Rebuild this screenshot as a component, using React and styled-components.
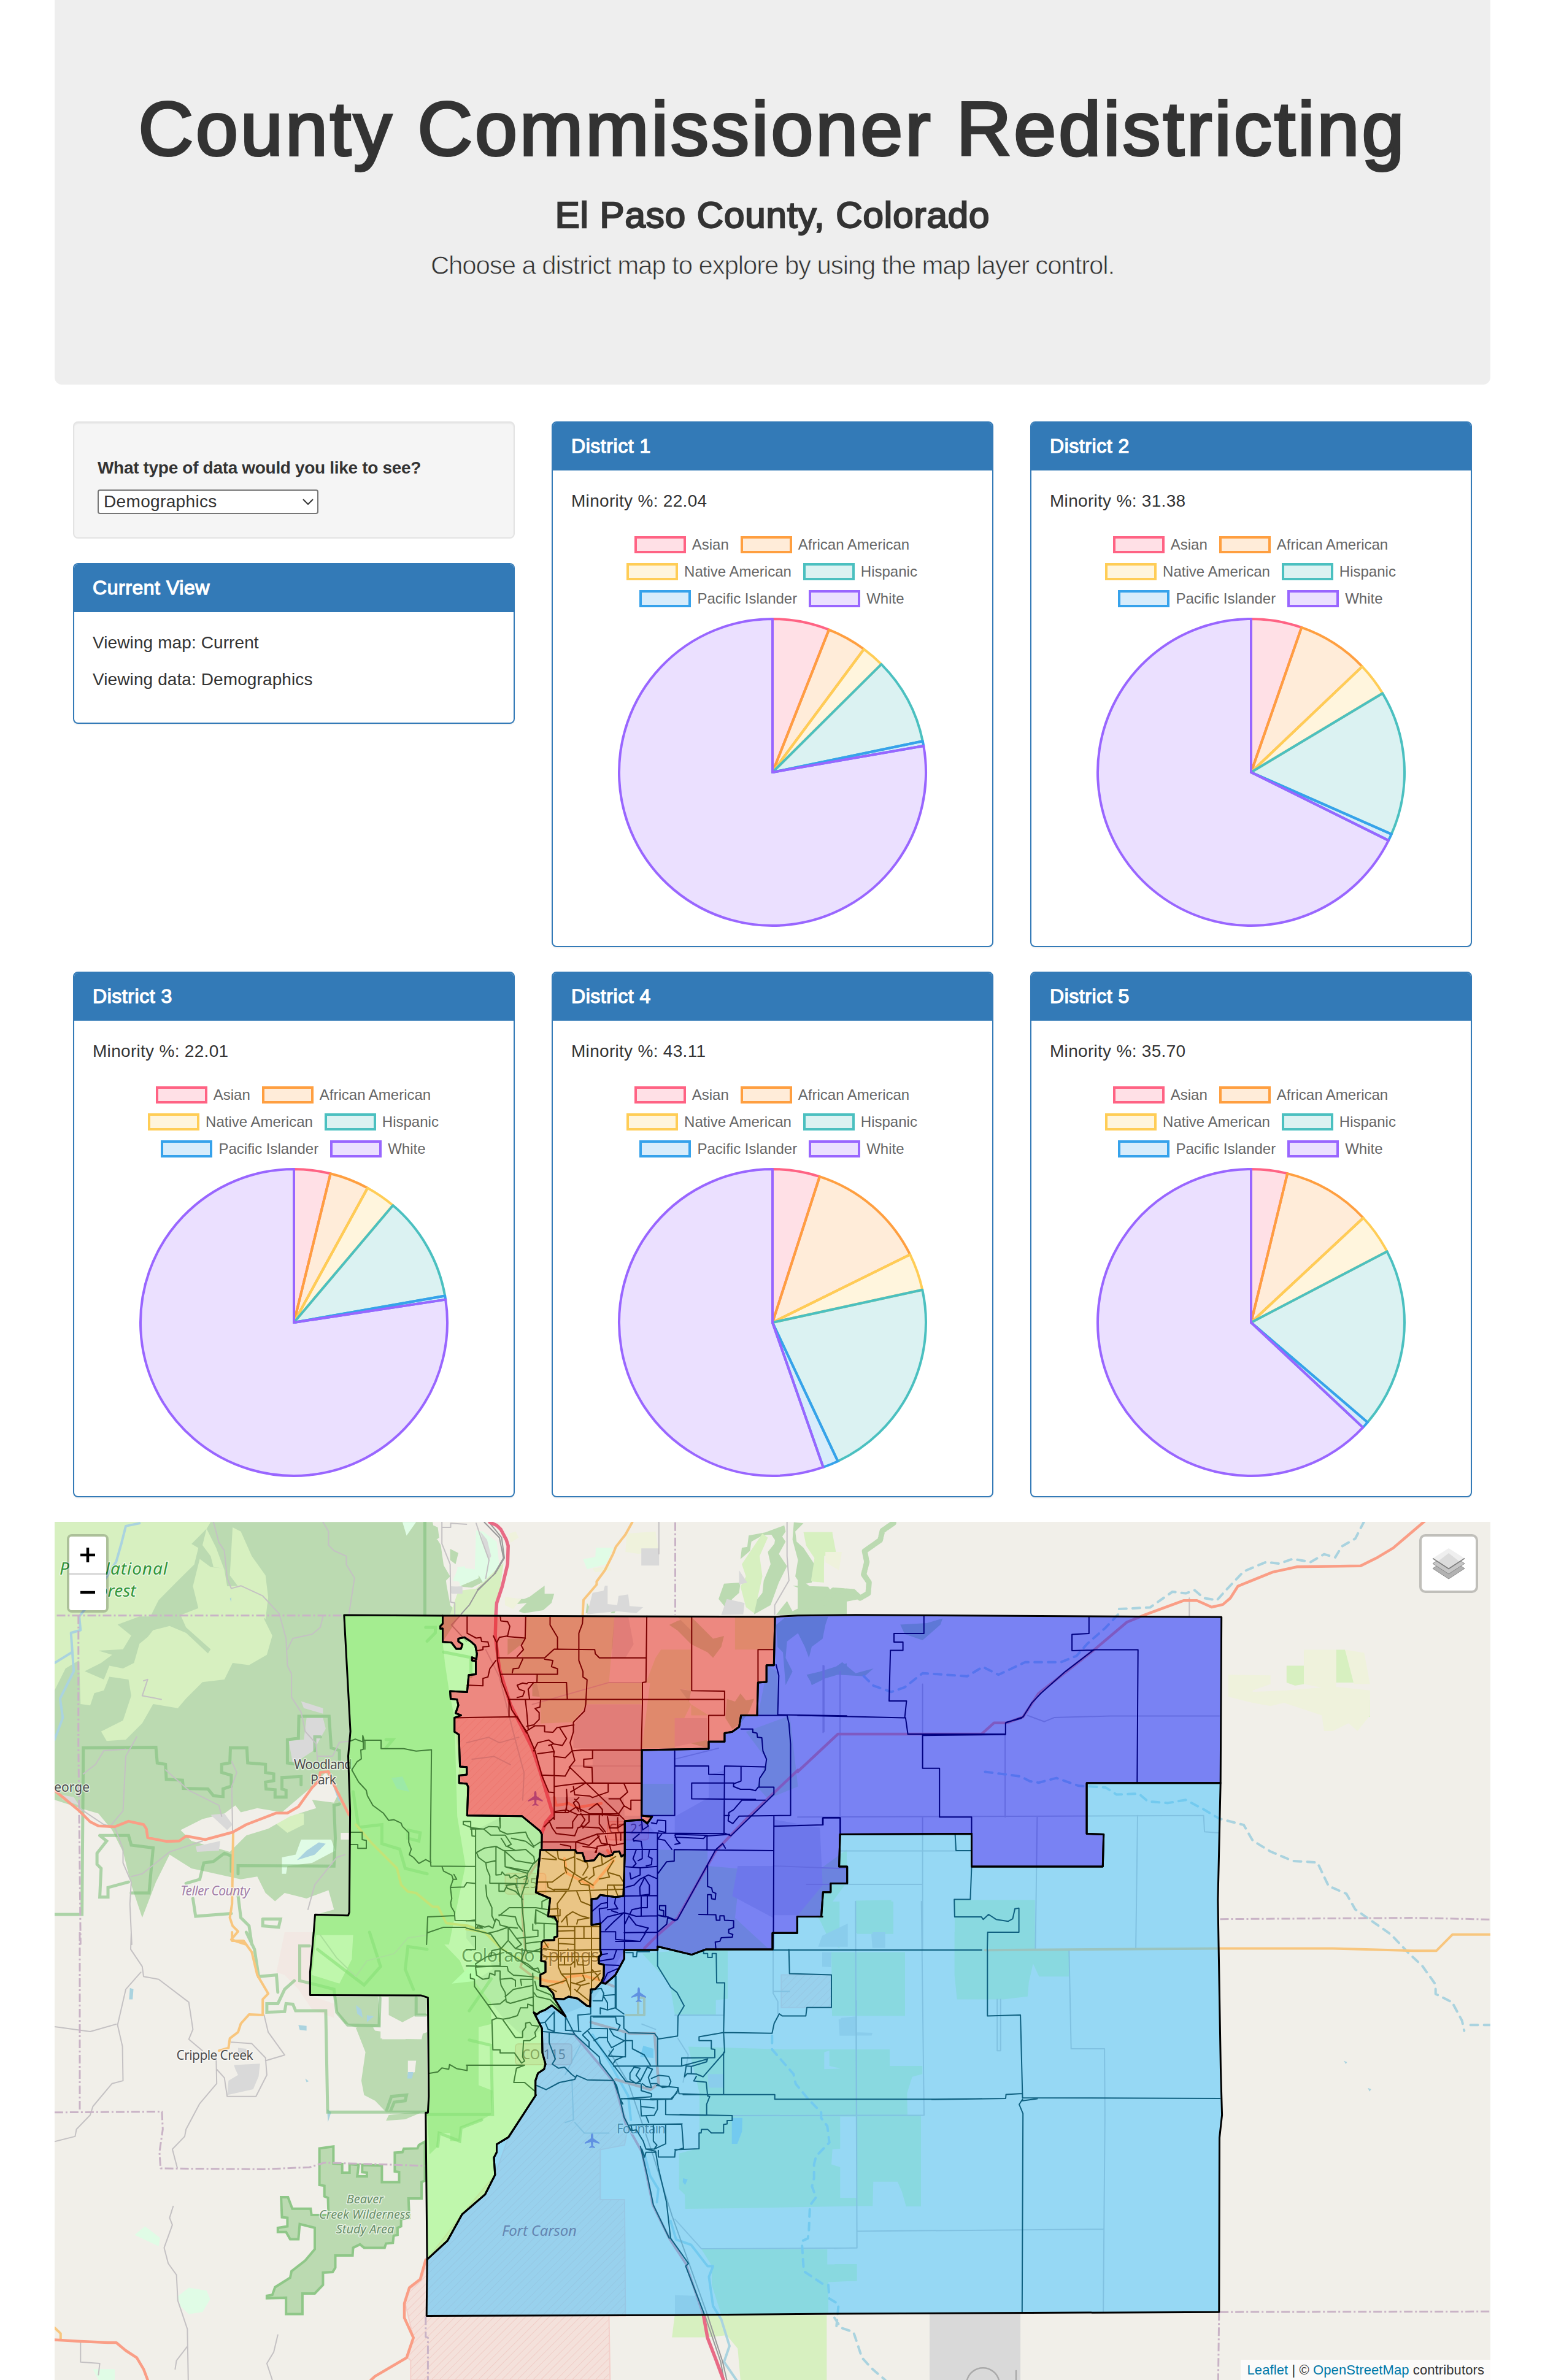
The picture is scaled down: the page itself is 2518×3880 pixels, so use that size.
import React from "react";
import styled, { createGlobalStyle } from "styled-components";

const GlobalStyle = createGlobalStyle`
  *, *::before, *::after { box-sizing: border-box; }
  html, body { margin: 0; background: #fff; }
  body {
    font-family: "Liberation Sans", Arial, sans-serif;
    font-size: 28px;
    line-height: 40px;
    color: #333;
  }
`;

/* ---------- page frame ---------- */

const Container = styled.main`
  width: 2340px;
  margin: 0 auto;
`;

const Jumbotron = styled.header`
  height: 627px;
  padding-top: 141px;
  background: #eee;
  border-radius: 0 0 12px 12px;
  text-align: center;
`;

const Title = styled.h1`
  margin: 0;
  font-size: 124px;
  font-weight: 400;
  line-height: 139px;
  letter-spacing: 3.95px;
  -webkit-text-stroke: 4px #333;
`;

const Subtitle = styled.h2`
  margin: 38px 0 0;
  font-size: 60px;
  font-weight: 400;
  line-height: 66px;
  letter-spacing: 0.95px;
  -webkit-text-stroke: 2.4px #333;
`;

const Lead = styled.p`
  margin: 20px 0 0;
  font-size: 42px;
  line-height: 58px;
  letter-spacing: -1.12px;
  -webkit-text-stroke: 0.8px #eee;
`;

const Grid = styled.section`
  display: grid;
  grid-template-columns: repeat(3, 720px);
  grid-auto-rows: 857px;
  column-gap: 60px;
  row-gap: 40px;
  padding: 60px 30px 40px;
`;

const Stack = styled.div`
  display: flex;
  flex-direction: column;
  gap: 40px;
`;

/* ---------- controls and panels ---------- */

const Well = styled.div`
  display: flex;
  flex-direction: column;
  align-items: flex-start;
  height: 191px;
  padding: 54px 38px 0;
  background: #f5f5f5;
  border: 2px solid #e3e3e3;
  border-radius: 8px;
  box-shadow: inset 0 2px 2px rgba(0, 0, 0, 0.05);
`;

const Label = styled.label`
  font-weight: 700;
  letter-spacing: -0.32px;
  line-height: 40px;
  margin-bottom: 15px;
`;

const Select = styled.button`
  display: flex;
  align-items: center;
  justify-content: space-between;
  width: 360px;
  height: 40px;
  padding: 0 6px 0 8px;
  border: 2px solid #767676;
  border-radius: 4px;
  background: #fff;
  color: #333;
  font: inherit;
  letter-spacing: 0.35px;
`;

const Panel = styled.article`
  height: ${(p) => p.$height}px;
  border: 2px solid #337ab7;
  border-radius: 8px;
  background: #fff;
  box-shadow: 0 2px 2px rgba(0, 0, 0, 0.05);
  overflow: hidden;
`;

const PanelHeading = styled.h3`
  height: 78px;
  margin: 0;
  padding: 20px 30px;
  background: #337ab7;
  color: #fff;
  font-size: 32px;
  font-weight: 400;
  line-height: 36px;
  letter-spacing: 0.55px;
  -webkit-text-stroke: 1.3px #fff;
`;

const PanelBody = styled.div`
  padding: 30px 30px 0;
`;

const Line = styled.p`
  margin: 0 0 20px;
  letter-spacing: ${(p) => p.$tracking ?? 0.1}px;
`;

/* ---------- chart ---------- */

const Legend = styled.div`
  display: flex;
  flex-direction: column;
  gap: 16px;
  margin: 37px 0 16px -2px;
`;

const LegendRow = styled.div`
  display: flex;
  justify-content: center;
  gap: 19px;
  height: 28px;
`;

const LegendItem = styled.span`
  display: flex;
  align-items: center;
  gap: 10px;
  font-size: 24px;
  line-height: 28px;
  color: #666;
`;

const Swatch = styled.i`
  width: 84px;
  height: 28px;
  border: 4px solid rgb(${(p) => p.$rgb});
  background: rgba(${(p) => p.$rgb}, 0.2);
`;

const Pie = styled.svg`
  display: block;
  width: 506px;
  height: 506px;
  margin: 0 auto;
`;

const GROUPS = {
  Asian: "255,99,132",
  "African American": "255,159,64",
  "Native American": "255,205,86",
  Hispanic: "75,192,192",
  "Pacific Islander": "54,162,235",
  White: "153,102,255",
};

const LEGEND_ROWS = [
  ["Asian", "African American"],
  ["Native American", "Hispanic"],
  ["Pacific Islander", "White"],
];

/* End angle of every slice but the last, in degrees clockwise from noon. */
const DISTRICTS = [
  { id: 1, minority: "22.04", ends: [21.6, 36.6, 45.2, 78.3, 80.1] },
  { id: 2, minority: "31.38", ends: [19.2, 46.4, 59, 113.8, 116.4] },
  { id: 3, minority: "22.01", ends: [13.8, 28.7, 40.2, 80, 81.4] },
  { id: 4, minority: "43.11", ends: [17.9, 63.7, 77.7, 154.8, 160.7] },
  { id: 5, minority: "35.70", ends: [13.7, 47, 62.4, 130.6, 133.2] },
];

const slicePath = (from, to) => {
  const pt = (deg) => {
    const a = (deg * Math.PI) / 180;
    return `${(253 + 250 * Math.sin(a)).toFixed(2)},${(253 - 250 * Math.cos(a)).toFixed(2)}`;
  };
  return `M253,253 L${pt(from)} A250,250 0 ${to - from > 180 ? 1 : 0} 1 ${pt(to)} Z`;
};

function DistrictPanel({ district }) {
  const stops = [0, ...district.ends, 360];
  return (
    <Panel $height={857}>
      <PanelHeading>District {district.id}</PanelHeading>
      <PanelBody>
        <Line $tracking={0.3}>Minority %: {district.minority}</Line>
        <Legend>
          {LEGEND_ROWS.map((row) => (
            <LegendRow key={row[0]}>
              {row.map((name) => (
                <LegendItem key={name}>
                  <Swatch $rgb={GROUPS[name]} />
                  {name}
                </LegendItem>
              ))}
            </LegendRow>
          ))}
        </Legend>
        <Pie viewBox="0 0 506 506">
          {Object.values(GROUPS).map((rgb, i) => (
            <path
              key={rgb}
              d={slicePath(stops[i], stops[i + 1])}
              fill={`rgba(${rgb},0.2)`}
              stroke={`rgb(${rgb})`}
              strokeWidth="4"
              strokeLinejoin="round"
            />
          ))}
        </Pie>
      </PanelBody>
    </Panel>
  );
}

/* ---------- map geometry ---------- */

/* Each survey sheet has its own origin and scale: [x, y, scaleX, scaleY]. */
const SHEETS = {
  nw: [80, 2470, 0.44643, 0.44643],
  n: [680, 2600, 0.44643, 0.44643],
  ne: [1300, 2470, 0.72704, 0.5102],
  sw: [80, 3150, 0.44643, 0.46556],
  s: [680, 3200, 0.44643, 0.43367],
  se: [1360, 3150, 0.68878, 0.46556],
  top: [680, 2470, 0.44643, 0.33333],
  city: [760, 2930, 0.33333, 0.33333],
  plain: [1100, 3100, 0.33333, 0.44643],
};

const at = (sheet, text) => {
  const [ox, oy, sx, sy] = SHEETS[sheet];
  return text
    .trim()
    .split(/\s+/)
    .map((p) => {
      const [x, y] = p.split(",").map(Number);
      return [+(ox + x * sx).toFixed(1), +(oy + y * sy).toFixed(1)];
    });
};

const back = (pts) => [...pts].reverse();
const ring = (...parts) => "M" + parts.flat().map((p) => p.join(",")).join("L") + "Z";

/* Several polylines or polygons, separated by ";". */
const lines = (sheet, text, close) =>
  text
    .split(";")
    .filter((s) => s.trim())
    .map((s) => "M" + at(sheet, s).map((p) => p.join(",")).join("L") + (close ? "Z" : ""))
    .join("");
const areas = (sheet, text) => lines(sheet, text, true);

const redWest = at("n", "93,76 93,105 84,115 84,123 93,123 93,172 125,174 142,197 160,197 165,180 150,170 150,160 172,155 195,170 212,185 218,215 216,235 200,228 200,240 214,242 214,290 188,293 182,355 120,352 122,380 145,382 150,403 140,432 160,440 136,449 136,500 152,510 156,627 181,629 181,656 153,660 153,687 181,690 186,702 182,806 382,808 448,862 455,875 454,930");
const redSouth = at("city", "362,258 532,258 540,272 568,272 580,312 625,308 650,275 680,290 712,283 722,268 748,265 758,290 775,278");
const redEast = [
  ...at("city", "775,278 775,116 862,110 885,128 908,95 857,90"),
  ...at("n", "820,567 1064,562 1064,536 1122,536 1122,505 1150,500 1175,482 1182,440 1241,440 1244,320 1275,318 1275,257 1302,257 1306,80"),
];
const orangeWest = at("city", "362,258 340,465 410,495 400,582 432,585 445,612 445,680 430,685 430,698 378,700 368,710 366,800 387,805 387,855 362,868 362,922 395,927 425,960 430,985");
const orangeEast = at("city", "775,278 768,483 730,488 655,478 640,495 612,498 612,625 655,618 655,745 660,770 648,780 648,812 673,820 672,875 660,905");
const orangeSouth = at("city", "660,905 630,938 608,940 605,1023 590,1020 545,985 500,975 475,988 430,985");
const greenEast = [
  ...at("city", "430,985 485,1072 418,1018 385,1040 360,1050 345,1062 330,1052 370,1130 372,1250 387,1305 380,1330 350,1350 338,1385 338,1460"),
  ...at("s", "433,497 333,655 290,682 290,712 280,732 284,797 248,870 164,945 110,1045 36,1115"),
];
const greenWest = [
  ...at("sw", "1380,1147 1375,632 1383,632 1386,575 1383,229 1357,221 953,220 953,140 966,0"),
  ...at("nw", "971,1459 1092,1462 1096,1450 1099,1080 1092,880 1100,790 1077,365"),
];
const blueSouth = [
  ...at("ne", "948,856 648,856 648,1018 686,1020 684,1123 390,1123 390,1018 95,1020 93,1123 111,1123 111,1177 74,1177 74,1205 57,1205 53,1283"),
  ...at("plain", "720,55 598,55 598,115 477,115 477,175 150,175 82,194"),
  ...at("city", "935,730 935,747 772,747 772,790 728,870 680,912 660,905"),
];
const blueNorth = at("ne", "0,321 130,319 950,326");
const cyanEast = [...at("ne", "948,856 942,1230"), ...at("se", "909,50 914,480 917,640 911,720 910,1330")];
const cyanSouth = [...at("se", "0,1336"), ...at("s", "930,1324 34,1327")];

const OVERLAY = [
  { fill: "rgb(142,255,111)", d: ring(redWest, orangeWest, greenEast, greenWest) },
  { fill: "rgb(234,33,23)", d: ring(redWest, redSouth, redEast) },
  { fill: "rgb(252,177,49)", d: ring(redSouth, orangeEast, orangeSouth, back(orangeWest)) },
  { fill: "rgb(2,21,253)", d: ring(back(redEast).slice(0, 1), blueNorth, blueSouth, back(orangeEast), redEast) },
  { fill: "rgb(60,193,255)", d: ring(cyanEast, cyanSouth, back(greenEast), back(orangeSouth), back(blueSouth)) },
];

const FOREST =
  areas("nw", "20,25 1400,25 1412,80 1430,110 1440,180 1450,250 1465,330 1500,365 1437,463 1445,540 1460,640 1480,740 1490,1100 1520,1280 1460,1568 960,1568 971,1460 1040,1440 1020,1370 940,1400 900,1390 860,1380 825,1410 790,1380 760,1320 700,1330 520,1290 440,1240 390,1340 340,1470 300,1350 275,1250 270,1230 230,1150 180,1090 130,1075 20,1040") +
  areas("sw", "960,0 1400,0 1500,100 1568,260 1568,640 1375,632 1386,575 1383,229 953,220;1040,225 1200,225 1210,330 1140,340 1080,320 1050,280;1240,228 1380,228 1378,290 1340,290 1290,315 1240,290;1120,335 1180,330 1190,345 1230,350 1215,375 1300,375 1380,350 1380,630 1230,630 1190,590 1150,570 1140,520 1155,420;1230,660 1240,640 1375,625 1300,655") +
  areas("s", "40,60 200,40 270,130 270,230 190,250 200,450 275,480 270,570 235,590 160,620 155,670 120,670 120,640 80,640 75,690 45,720 36,570") +
  areas("top", "0,35 40,38 75,60 80,110 70,120 90,230 120,300 105,320 120,485 0,485;120,165 150,185 140,240 120,220;160,310 245,275 250,320 200,355 160,350;410,400 440,370 465,345 465,385 500,385 490,430 460,465 390,480 370,470 400,430 330,440 320,410 390,410;1210,100 1270,85 1340,50 1345,80 1300,170 1310,90 1260,100 1220,130 1215,175 1180,215 1185,160 1205,155;1375,35 1410,40 1380,80 1385,130 1410,160 1450,240 1440,330 1400,340 1380,300 1390,220 1370,120;1290,90 1320,80 1345,130 1320,190 1350,250 1320,330 1290,440 1230,485 1230,430 1260,380 1265,320 1290,240 1280,180 1310,130;1120,335 1180,330 1175,380 1150,410 1130,460 1100,410;1310,488 1350,420 1370,470 1400,450 1440,380 1370,345 1500,350 1520,390 1568,365 1568,490;620,430 640,480 615,480;735,440 720,480 705,480") +
  areas("n", "650,90 720,90 730,150 710,200 690,240 660,180;920,110 950,95 1000,80 1030,110 1080,160 1120,150 1110,190 1080,230 1060,210 1000,180 950,130;1130,380 1160,390 1180,360 1200,385 1230,380 1210,430 1180,470 1150,490 1125,450;380,240 460,240 500,285 370,285;330,160 390,160 380,180 330,220;420,320 545,325 545,380 420,370;600,480 650,500 620,540 570,550;930,340 1000,350 990,400 930,380;1000,490 1060,500 1060,560 990,540;1310,110 1340,85 1380,80 1500,80 1490,110 1480,160 1440,190 1430,230 1415,190 1390,140 1350,170 1345,230 1370,280 1345,330 1335,210 1315,190;1430,300 1470,280 1568,250 1568,280 1500,300 1440,330") +
  areas("ne", "0,200 40,240 100,235 150,265 60,290 40,310 0,300;230,350 290,345 325,330 320,350 280,400 240,380;20,510 80,490 100,470 130,505 170,490 150,515 90,510 30,535");

const GRASS =
  areas("nw", "20,25 590,25 575,50 610,120 640,200 650,260 700,258 790,310 785,380 815,440 795,510 730,548 670,540 640,600 560,610 500,670 470,705 380,690 340,760 280,820 210,825 190,790 270,750 300,660 290,600 220,590 200,640 165,650 150,695 115,690 110,530 60,560 20,640;670,45 700,60 740,150 790,220 800,300 790,380 720,300 660,220;830,1110 870,1088 930,1090 930,1130 870,1160 820,1120") +
  areas("top", "120,485 150,370 215,360 260,300 315,235 290,490;1410,83 1515,83 1530,190 1485,200 1485,330 1440,325 1450,210 1420,150;1260,90 1280,110 1250,200 1260,300 1230,480 1200,450 1180,350 1200,300 1185,240 1220,170") +
  areas("n", "400,78 720,78 700,320 822,320 822,400 620,400 570,465 450,470 450,385 430,290 300,290 295,230 380,230;890,200 1000,200 1000,350 835,320 870,230;1160,80 1300,80 1300,200 1244,200 1160,200;950,80 1000,80 1000,130;850,320 940,320 1000,400 960,480 940,560 820,560;1000,400 1064,440 1000,440;877,930 1060,935 1060,990 1180,1000 1160,1180 1280,1290 1000,1312 877,1290;1360,440 1390,700 1280,745 1240,700 1275,600 1200,500 1350,445;820,690 935,690 935,806 820,806;1280,260 1316,280 1316,438 1244,438;1390,1060 1568,930 1568,1050 1480,1170 1390,1170") +
  areas("ne", "1096,481 1135,481 1135,540 1115,545 1096,535;1135,435 1172,480 1135,480;1207,430 1227,430 1247,505 1247,535 1207,535;1247,590 1283,590 1283,645 1245,643;130,1232 210,1230 214,1335 130,1335;352,1230 532,1230 532,1385 352,1385;15,55 78,55 78,110 60,115 58,215 30,210 40,120") +
  areas("plain", "0,180 258,180 258,355 200,360 200,415 0,415 -25,300 -160,190;765,185 1125,185 1125,418 768,418;885,0 1068,0 1068,118 890,118;645,0 805,0 805,170 760,150 710,70;65,530 540,540 1050,540 1050,600 1210,600 1210,630 1160,640 1135,700 1137,780 1203,783 1203,1113 1130,1113 1110,1060 1088,1023 970,1023 967,1112 890,1112 890,785 808,785 808,903 770,905 765,960 808,970 808,1082 890,1082 890,1112 300,1120 50,1122 48,1070 20,1050 20,920 120,900 120,700;130,1270 745,1270 745,1325 890,1325 890,1385 750,1390 750,1505 225,1505 180,1400 180,1330") +
  areas("se", "284,0 475,0 475,60 555,62 555,155 484,155 470,110 460,175 457,225 400,235 290,235 284,150;0,1162 53,1162 53,1222 0,1222") +
  areas("s", "940,1324 1495,1324 1495,1568 1180,1568 1170,1450 1130,1400 1060,1408 930,1408");

const OPEN_LAND =
  areas("nw", "480,1150 560,1110 640,1090 680,1060 700,1085 760,1070 850,1085 950,1000 1010,940 1060,1010 1040,1050 960,1040 975,1070 880,1100 800,1145 720,1170 660,1230 520,1190;1065,1160 1095,1160 1095,1185 1065,1185") +
  areas("sw", "975,10 1110,10 1105,95 1060,180 960,150;1210,305 1370,330 1360,375 1210,372;1310,450 1340,450 1335,490 1310,500") +
  areas("plain", "730,550 755,545 755,600 810,610 730,612");

const WOODS =
  areas("nw", "370,370 400,310 470,240 530,180 545,120 520,105 575,50 560,110 590,150 600,190 640,195 590,190 550,160 525,260 545,340 480,365 500,410 590,490 580,505 500,430 440,405 380,420 360,445 330,470 310,540 270,560 220,550 200,600 130,570 190,540 230,510 180,495 270,490 300,440 250,400 330,370;400,320 440,275 470,275 460,330 430,340");

const TOWN =
  areas("nw", "875,825 930,820 940,740 1000,740 1010,780 965,860 890,910;590,1095 640,1090 670,1130 650,1150;535,1210 625,1190 620,1225 540,1230;920,680 1000,705 1000,725 930,705;1465,260 1510,262 1500,285 1465,285;40,1020 90,1030 110,1060 50,1040") +
  areas("top", "640,380 680,370 685,345 695,345 695,435 730,440 735,395 770,388 775,445 825,450 800,480 730,470 620,485;230,80 255,120 270,200 262,220 250,180;125,350 165,348 165,385 125,385;818,163 883,163 883,247 818,247;1175,270 1205,330 1175,340;1130,410 1195,430 1190,485 1110,488") +
  areas("city", "45,160 165,100 270,100 362,170 360,260 775,260 775,90 850,90 930,180 935,740 775,745 680,905 605,1010 480,1060 330,1050 375,1130 300,1190 180,1080 40,900 130,840 45,600;370,60 400,0 770,0 775,110 535,258 372,250;0,620 130,650 170,740 90,800 0,690") +
  areas("n", "1064,660 1120,640 1120,870 940,870 940,810 1064,740;1300,820 1470,850 1480,1060 1390,1170 1300,1170;720,78 770,78 790,180 760,230 710,230;1170,990 1300,990 1300,1180 1150,1100;640,570 815,570 815,688 640,687;570,480 620,400 820,400 818,565 570,560;940,450 1060,450 1060,530 940,555") +
  areas("sw", "675,465 770,460 765,505 745,550 650,570 655,520 690,500 680,480;690,405 720,408 730,440 690,420") +
  areas("se", "225,1335 440,1335 440,1568 225,1568;15,300 50,295 50,350 90,352 88,362 15,362;90,0 120,0 120,55 90,55") +
  areas("plain", "800,430 885,425 885,490 805,490;960,118 1028,118 1028,168 965,168;160,630 238,630 238,680 165,680;0,1437 115,1440 140,1505 0,1505;720,185 765,185 762,240 720,238;720,125 845,80 845,165 700,165");

const MINT =
  areas("nw", "850,1250 900,1240 920,1185 1030,1185 1045,1225 960,1270 870,1282 865,1310 850,1310;1290,25 1340,25 1305,75;1490,190 1568,200 1568,230 1500,260") +
  areas("top", "215,75 240,80 290,130 300,250 240,330 210,260;652,160 715,160 690,240 620,265 605,215 650,205;130,320 150,255 175,250 170,330") +
  areas("sw", "470,1275 510,1245 575,1255 588,1285 560,1330 510,1337 480,1310;312,1060 350,1030 405,1070 400,1100;160,1530 240,1530 240,1568 180,1568;1470,180 1568,90 1568,170");

const PALE =
  areas("ne", "965,510 1060,512 1060,540 1020,560 1020,600 965,580;1020,565 1095,560 1200,548 1283,560 1283,640 1255,690 1235,665 1200,690 1180,690 1175,640 1090,600 1060,610 1020,600;1135,430 1207,430 1207,560 1135,540;1227,430 1270,440 1283,540 1247,540") +
  areas("top", "765,90 870,80 880,163 810,190 760,180;335,90 360,80 370,110 340,135;320,400 380,410 350,460 320,440;640,260 700,250 710,270 650,280;1490,180 1550,180 1540,270 1490,230");

const PINK = areas("sw", "860,0 960,0 950,220 1040,250 1040,300 960,270 910,200 860,150 830,140");

const MILITARY =
  ring(at("sw", "1380,1147 1360,1220 1315,1250 1300,1300 1330,1420 1310,1490 1320,1500 1320,1568"), at("s", "704,1568 700,1327 760,1327 757,890 668,890 668,702 757,685 770,610 720,445 570,265 460,260 467,380 433,430 433,497 333,655 284,797 164,945 36,1115")) +
  areas("n", "136,449 365,445 480,720 495,800 450,860 382,808 182,806 181,690 153,660 156,627") +
  areas("plain", "520,268 765,268 765,387 520,387");

const WATER =
  areas("nw", "905,1260 940,1225 985,1195 1010,1200 970,1240;1250,960 1290,955 1315,1010 1270,1000;660,305 665,300 665,318") +
  areas("sw", "295,195 308,200 305,235 292,235;910,325 940,328 940,345 915,342;1120,255 1140,270 1145,300 1125,285;1160,290 1185,295 1160,315;1310,490 1330,490 1325,512 1308,512;1015,620 1030,630 1018,665;935,512 948,522 940,525") +
  areas("plain", "278,790 330,790 328,840 305,885 278,885;40,1010 62,1015 50,1035 38,1025") +
  areas("se", "1205,450 1213,455 1210,462;1262,545 1270,550 1266,558") +
  areas("city", "865,1215 915,1230 915,1275 850,1270");

const FOREST_EDGE =
  lines("nw", "20,1458 120,1458 125,850 390,848 395,905 425,910 428,965 487,968 490,998 580,1000 600,1025 635,1028 635,1000 665,990 665,950 630,940 630,910 660,905 662,850 722,850 725,905 790,910 790,940 820,945 820,970 790,975 792,1000 825,1003 825,1030 865,1030 865,1005 850,1000 850,958 920,955 920,985;905,910 870,905 870,820 910,815 912,735 1022,735 1030,850 1060,860 1060,900;970,860 970,810 990,810;1372,25 1372,365;690,1310 690,1280 1040,1282 1045,1180 1040,1060 1060,1055;560,1290 565,1270 600,1265 640,1235 665,1245 665,1300;690,1390 700,1470 730,1500 740,1568;560,1290 550,1330 500,1345;525,1400 535,1465 665,1455;185,1170 290,1170 300,1205 380,1215 365,1380 300,1380;185,1170 210,1190 175,1235 175,1275 190,1290 185,1395 215,1395 215,1360 290,1340;780,1475 845,1475 838,1505 780,1500 780,1475;1375,410 1410,410 1410,430 1380,460;1440,500 1540,520 1540,590;1230,820 1255,820 1230,850;1110,1010 1130,1140 1215,1130 1215,1200 1280,1220 1300,1290 1380,1310;1310,1150 1355,1160 1350,1190 1310,1180 1310,1150") +
  lines("sw", "720,0 750,60 765,155 830,150 835,210;895,170 860,200 835,250 795,250 795,280 860,278 865,250 890,252 900,275 1010,275 1017,630 1375,630;950,48 915,48 915,170 980,185 1040,200 1050,280 1090,325 1205,328 1208,230;1230,630 1250,575 1305,570 1300,590 1260,595 1245,630;1340,230 1340,290 1375,290;980,60 1150,185 1210,120 1170,0;1330,200 1300,130 1310,50 1380,60") +
  lines("s", "36,570 275,570 270,310 190,290;270,60 190,180;75,690 80,640 155,670 160,620 235,590");

const BEAVER_CREEK = areas("sw", "987,757 1038,750 1038,810 1070,812 1070,842 1097,842 1097,812 1130,815 1125,855 1160,855 1160,842 1143,840 1143,815 1215,817 1215,875 1278,875 1278,840 1262,838 1262,772 1290,770 1295,758 1345,757 1350,745 1372,733 1372,870 1360,875 1360,932 1312,932 1315,1000 1285,1005 1285,1030 1272,1035 1272,1060 1258,1063 1255,1088 1230,1090 1225,1105 1150,1105 1135,1093 1110,1105 1108,1132 1045,1132 1045,1175 1035,1190 1000,1192 1000,1235 970,1265 925,1265 925,1337 865,1337 865,1280 795,1282 795,1273 815,1270 825,1243 880,1210 885,1187 935,1150 970,1110 970,1035 915,1022 910,1075 880,1075 865,1050 835,1050 835,1035 870,1030 870,1000 850,998 847,928 872,928 888,968 955,968 958,990 1020,990 1018,930 1005,925 1005,888 987,885");

const MINOR_ROADS =
  lines("nw", "600,25 620,100 640,130 650,230 665,268 700,258 780,295 840,360 865,450 870,550 885,580 885,665 920,720 935,790 975,835 980,900;1000,25 1020,60 1020,110 1040,130 1085,150 1085,180 1115,230 1095,360;1000,370 990,410 960,435 890,450 870,490;320,810 280,880 270,1080 220,1140;240,1140 270,1220 270,1270 300,1340 295,1420 302,1568;125,945 170,910 200,860 280,855;670,1160 667,990 685,940 667,900;1080,1240 1050,1250 970,1350 945,1440;300,1320 340,1310 440,1230 560,1190;425,930 510,1005 620,1060 630,1100;345,605 360,600 340,660 410,673;110,1070 200,1130 240,1140;980,880 1035,880 1060,830 1100,825") +
  lines("sw", "300,0 298,60 340,120 345,155 400,165 510,245 525,340 510,375 560,415;335,140 280,200 250,325 268,400 270,520 230,530 160,610 150,640 100,690 95,715 20,733;20,331 150,348 245,322;610,440 612,530 550,600 500,690 495,715 450,760 468,825;453,960 440,1000 450,1025 420,1105 435,1160 465,1200 470,1290 505,1390 508,1568;785,290 800,350 860,430 790,450;665,385 740,390 790,440 795,500 755,575 650,575 640,510 612,480;835,1410 820,1470 795,1510 815,1568;115,1437 115,1505 185,1510 180,1550;505,1450 465,1500 460,1530;990,10 1050,90 1120,155 1160,100 1260,75 1310,20 1380,10") +
  lines("top", "90,35 90,140 120,240 122,425 137,430 137,485;90,60 122,60 122,40 180,45;882,35 882,190;1350,35 1350,200 1357,320 1305,440 1305,485;215,40 235,120 262,220 250,310") +
  lines("ne", "878,265 878,322;465,700 465,965;95,500 95,1020;280,540 280,700;280,965 280,1390;537,965 533,1385;762,960 758,1385;0,965 910,960 912,1012 943,1015;515,640 553,660 575,647 700,642 945,642;57,480 57,695;95,1073 388,1073;20,1180 278,1180") +
  lines("plain", "883,0 890,1265 130,1268 0,1160;1205,0 1218,780 280,782;480,175 480,335 503,365 503,410;480,328 560,328;15,500 65,560 40,660;0,415 235,415") +
  lines("se", "555,62 560,408 639,408 640,640 636,1330;53,1047 636,1040;52,240 53,1105 0,1107;385,235 385,415 393,415 393,235") +
  lines("n", "250,200 300,300 350,500 390,650 385,750;180,540 260,520 300,540 370,520;200,600 280,590 340,620;420,400 700,320 820,320;560,625 820,625;1485,260 1485,500;1300,990 1568,1000;940,600 1100,560") +
  lines("s", "565,440 570,590 540,600;575,600 610,640 700,640;540,420 600,300 560,250;820,230 870,250");

const RAIL = lines("top", "245,35 300,110 315,210 280,290 220,370 190,440 160,485;262,35 308,110 318,210 285,285 220,365") + lines("n", "155,78 125,110 180,170") + lines("s", "1060,1325 1115,1500 1130,1568;1050,1325 1108,1500 1120,1568;700,330 770,450 820,600 860,720 930,950 1060,1325");

const TRUNK =
  lines("nw", "20,1005 110,1080 150,1120 180,1135 240,1138 290,1118 345,1130 355,1145 360,1178 430,1192 475,1190 500,1172 570,1185 670,1158 720,1130 830,1088 870,1088 910,1065 960,995 985,970 990,940 1020,937 1040,985 1095,1095") +
  lines("sw", "20,1427 115,1433 215,1437 245,1437 280,1465 320,1490 345,1530 360,1568;1375,1147 1355,1215 1315,1245 1297,1300 1297,1350 1330,1420 1305,1490 1190,1555 1175,1568") +
  lines("ne", "1405,20 1335,105 1300,135 1262,162 1120,165 1065,182 987,227 970,265 953,286 928,294 895,273 865,273 780,318 738,342 665,430 540,570 505,645 468,664 440,664 412,700 90,700 0,820") +
  lines("n", "1390,640 1210,810 1090,935 950,1180 880,1240 830,1290") +
  lines("city", "330,880 400,900 470,905 490,880 560,870 640,890 720,925;430,0 440,40 500,30 540,50 660,30;690,260 720,310 620,430;365,740 400,720;480,300 490,370 620,440;608,1100 800,1155 920,1155 940,1400 900,1430 730,1380");

const ORANGE_ROADS =
  lines("nw", "1120,1130 1180,1200 1270,1290 1285,1350 1310,1375 1340,1380 1400,1430 1420,1430 1450,1490 1530,1500 1568,1515;672,1160 668,1420 660,1470 670,1500 690,1520 665,1550 720,1568") +
  lines("sw", "668,0 668,30 710,30 740,70 760,150 800,215 780,235 780,290 730,288 700,320 690,350 660,372 655,405 620,415;20,1385 42,1405 42,1427") +
  lines("top", "785,35 760,95 725,155 715,190 685,270 655,325 655,340 607,415 604,490") +
  lines("ne", "420,1390 945,1385 1200,1385 1380,1392 1432,1392 1468,1340 1553,1340") +
  lines("city", "0,645 90,660 170,740 260,790;840,970 840,1065 780,1065;840,980 870,980 870,1065 840,1065");

const MOTORWAY =
  lines("top", "265,35 290,50 305,70 325,120 332,150 330,240 310,350 290,430 287,490") +
  lines("n", "287,80 285,150 300,270 340,400 420,560 450,650 480,750 495,800 470,830 455,870") +
  lines("s", "1045,1325 1060,1410 1090,1490 1118,1568");

const MOTORWAY_MINOR =
  lines("s", "570,265 720,450 760,600 820,710 860,910 920,1035 980,1130 1045,1325") +
  lines("city", "360,300 275,430 275,600 290,760 265,830 330,880");

const RIVERS_DASHED =
  lines("ne", "1270,20 1250,75 1220,100 1205,135 1180,125 1150,150 1110,140 1080,155 1050,150 1000,180 960,240 940,272 910,265 890,240 870,250 840,245 790,295 720,300 720,315 690,360 650,410 625,450 590,470 510,470 480,490 450,510 415,485 380,515 330,510 280,505 240,550 210,565 170,545 145,510;420,820 500,835 520,850 540,855 580,840 630,865 690,870 715,893 765,890 785,915 830,920 870,910 910,940 945,970 1000,990 1020,1040 1060,1075 1110,1105 1165,1110 1190,1185 1230,1210 1250,1260 1330,1340 1370,1400 1400,1440 1430,1500 1430,1530 1465,1555") +
  lines("se", "1465,255 1485,310 1490,345;1505,325 1552,325;0,1350 15,1385 45,1400 65,1490 90,1530 120,1568") +
  lines("plain", "475,490 475,540 580,630 590,665 650,720 715,770 715,790 745,820 755,880 690,930 680,960 680,1010 670,1040 690,1080 660,1110 655,1200 650,1230 620,1240 630,1350 720,1395 750,1400 755,1450 800,1470 790,1550");

const RIVERS =
  lines("nw", "330,30 280,40 265,100 245,170 150,320 110,370 115,420 80,430 85,500 20,540;85,500 90,570 40,670 50,740 20,820;1040,985 1060,1040") +
  lines("s", "925,970 945,1040 1000,1060 1060,1140 1080,1140 1065,1180 1080,1290 1110,1340 1140,1440 1120,1500 1165,1568;640,270 700,370 770,500 780,590;830,720 850,800 880,850 875,900");

const COUNTY_LINES =
  lines("nw", "28,367 1077,367;107,367 107,840 115,1568") +
  lines("sw", "112,0 112,628;20,631 412,628 415,690 403,770 407,827 780,830 950,823 1005,807 1375,818;1375,1345 1375,1417 1383,1420 1383,1568") +
  lines("top", "942,35 942,488") +
  lines("ne", "947,1291 1380,1287 1553,1292") +
  lines("se", "912,1330 1552,1328;910,1330 908,1568");

/* Precinct boundaries, grouped by the district they lie in. */
const PRECINCTS = [
  {
    stroke: "#43803a",
    d:
      lines("nw", "1100,825 1118,818 1145,828 1145,805 1150,822 1212,822 1212,853 1295,853 1340,862 1396,857 1392,1255 1394,1282 1556,1283;1147,822 1147,855 1138,858 1140,890 1125,900 1105,930 1130,975 1158,1005 1162,1025 1182,1060 1220,1088 1240,1115 1258,1112 1285,1125 1290,1137 1313,1160 1313,1195 1322,1220 1315,1240 1330,1250 1350,1272 1375,1258 1394,1268;1153,822 1153,855;1100,1158 1143,1158 1143,1185 1158,1188 1158,1217 1127,1217 1127,1203 1100,1203;1435,1285 1440,1300 1470,1315 1475,1330 1488,1330 1478,1312;1475,1330 1465,1360 1470,1400 1466,1415 1468,1430 1480,1450 1482,1480 1555,1482;1467,1360 1515,1358 1525,1342 1556,1345;1382,1467 1480,1463;1382,1467 1378,1568;1382,1525 1440,1505 1520,1505") +
      lines("n", "300,815 303,845;213,855 213,1220;168,838 168,828 195,828 195,850 240,855;168,838 198,850 200,880 213,882") +
      lines("city", "20,155 85,155 110,143 155,145 165,165 200,180 290,170 300,195 330,240 360,220;165,100 165,150;85,155 120,185 190,185 220,230 200,240 240,260 290,255 330,290 335,320;50,270 90,248 145,240 185,262 240,260;50,270 60,295 95,320 145,310;145,240 145,380 170,378 175,365 188,380 210,380 215,395 240,380 260,395 290,385 300,395;188,260 190,340 300,372;190,340 300,360;220,200 290,215 330,245;190,265 240,310 330,325 355,300;170,200 180,215 195,240;330,320 300,370 290,420 270,480 275,560 285,650 290,740 268,800;95,320 100,350 115,385 115,420 300,423;95,430 100,485 125,540 125,580 140,610;160,425 160,460 185,460 200,430 240,425 260,480 275,500;195,430 200,445 240,460 268,490;160,580 210,540 340,540 400,550;160,575 240,585 250,620 275,655;45,600 0,605;45,620 80,640 50,640 60,625 90,635 110,630 130,640 145,595 160,605 165,625 205,635 250,640;105,665 150,655 205,635 245,690 350,680;0,640 60,655 120,670 170,740 250,790 320,840 360,860;340,550 335,615 445,620;340,550 440,600;380,620 380,690;325,620 325,650 350,650 350,680;290,715 365,705;340,550 340,620;120,780 125,750 170,740 205,700 205,640;205,700 240,740 270,720 245,690;240,740 290,750 365,755;0,745 45,745 45,680 25,680;165,740 165,825 50,830 45,815 100,780 165,765;0,825 200,828 205,850 230,870 330,878;45,830 50,870 80,890 110,885 115,860 140,870 140,850 165,850 165,890 220,885 240,895 240,925;20,865 20,885 40,890 40,925 105,1015 150,1080;165,890 170,920 190,955 195,1000 215,1008 330,975;190,975 230,940 325,920;265,890 325,890;265,890 270,920;325,860 328,1045;290,740 300,760 320,755 365,740;268,800 300,815 330,840 350,835 360,860;105,1015 165,1010 190,990;150,1080 180,1085 210,1080 250,1068 265,1030 300,1030 300,1012 325,1020;150,1080 125,1090 130,1235 165,1235 165,1250 235,1250 270,1300 285,1290 275,1270 280,1190 310,1190 340,1170 335,1150 355,1120 320,1115 310,1100 290,1105 290,1125 275,1145 275,1175 240,1175 180,1090;0,1310 285,1310 245,1325 232,1395 285,1395 335,1438;335,900 345,940 410,965 425,985;330,955 345,975 410,990 440,1020 480,1065;370,545 370,510 400,495") +
      lines("s", "45,415 75,410 90,395 115,400 118,382 145,398 182,405 182,385 390,385"),
  },
  {
    stroke: "#7a0000",
    d:
      lines("n", "182,78 182,140 215,158 232,156 235,170 258,172 262,188 240,190 240,200 215,205;278,150 290,175 293,240 310,320 335,382 345,420 400,500 430,570 455,660 480,720 498,722;303,78 305,95 330,98 338,115 330,150 300,155 290,175;330,152 395,158 380,185 388,200 365,225;396,78 394,158;295,230 465,230;465,230 500,198 648,200 650,215 665,230 835,230;485,78 485,110 512,155 512,198;605,78 603,105 590,140 590,240 605,280 605,300 620,310 615,400 610,425 570,465 570,500 558,540 575,605 555,630;385,235 370,268 350,270 347,285;307,290 512,290 512,270 490,262 495,240 465,235;396,78 470,78;438,292 437,318;372,345 365,330 385,322 400,325 405,320 545,320 548,382;372,345 392,352 385,370 365,375;425,320 405,345 410,380;333,382 1122,382;838,78 835,318 822,320 822,400 818,565;1002,80 1002,350 1122,352 1122,440 1064,440 1064,536;1300,200 1244,200 1244,320;182,330 240,332 240,305 258,300 265,270 287,240;136,449 365,445 400,505;335,382 335,445;395,385 400,430 405,490;450,385 448,410 430,415 445,430 445,455 425,475 400,480;395,500 430,478 465,478 465,500 495,502 510,485 572,475;520,485 545,525 530,550 500,545 480,530 440,540 425,570;480,550 495,545;440,580 500,572 498,590 540,595 565,570 600,567 818,567;500,572 490,550;640,567 640,598 608,600 608,628 638,630 640,687;455,658 540,662 558,630;555,628 755,820;500,590 500,820;500,700 600,687 815,688;500,795 550,795 580,775 630,800 735,800;545,710 548,760 540,795;570,700 575,730 630,735 640,740;590,740 570,760 590,790;697,690 697,720 640,740;755,690 768,720 740,745 755,770 735,800;740,745 700,745;815,750 780,750 780,785 755,770;610,690 560,720") +
      lines("city", "372,218 535,218 640,180 770,172;380,145 410,115 430,95 430,0;405,115 420,150 440,178 530,188 545,150 570,140;430,70 490,62 545,85 670,85 745,90;545,85 520,120 520,150 440,150;490,0 490,62;530,10 550,30 560,70;600,60 640,30 665,60 665,90;560,80 580,110 560,140;600,90 600,120 570,150;570,145 650,150 670,170;650,90 650,130 680,170;535,218 535,258;535,218 600,235 650,190;570,240 640,250 630,270;640,180 660,225 720,235 775,225;460,230 510,240 510,250;690,95 700,150 740,150 770,130;740,100 740,150;730,175 735,230;755,175 755,210;680,190 690,230;635,270 640,240 700,230 710,270"),
  },
  {
    stroke: "#000080",
    d:
      lines("n", "940,570 940,806 820,806;940,625 1064,625 1064,655 1122,657;1122,625 1268,628;1122,625 1120,870;1182,490 1225,490 1225,502 1240,505 1242,520 1258,522 1262,570 1275,600 1270,640 1250,670 1248,700;1310,255 1320,295 1316,438 1568,442;1182,440 1350,440 1357,470 1363,545 1363,805 1175,808 1152,835 1135,825 1138,795 1155,785 1185,750 1270,750;1120,806 1140,806;1002,687 1155,687 1155,700 1180,710 1215,710 1235,715 1245,702 1302,702 1302,728 1145,880 1122,870;1002,687 1002,745 1235,747;1182,628 1182,680 1155,690;1302,810 1300,1290;1302,845 1480,840 1480,815 1545,815 1545,875;880,870 1120,872;942,875 1055,878 1045,890 942,885;1058,878 1058,930;938,930 1300,934;1125,925 1115,908 1090,930 1060,985 950,1185 940,1190 910,1175 880,1170;1060,985 1060,1065 1075,1070 1078,1085 1090,1090 1088,1112 1075,1110 1073,1095 1060,1095 1060,1165;1028,1167 1090,1168 1092,1188 1105,1188 1105,1172 1120,1172 1122,1188 1155,1190 1155,1215 1137,1222 1137,1235 1152,1240 1150,1250 1110,1252 1105,1265 1088,1268 1090,1290;877,870 877,1290;938,930 938,972 910,975 877,1020;757,830 757,1295;757,1100 877,1098;1060,880 1140,875") +
      lines("city", "780,255 935,255;780,172 940,175;820,215 815,205 845,180;820,212 855,215 860,250;855,90 862,160 890,140 880,125;905,125 930,130 935,112 975,115 975,172 940,165;940,205 970,210 1005,255;935,205 955,180;1020,185 1030,210 1045,225 1020,230;830,258 815,300 830,325 815,340;860,260 860,300 840,310;895,260 890,290 908,300 905,330 880,335;780,340 850,345 850,380 805,400 800,370;850,345 930,338;780,440 820,430 850,400 890,380 930,397;870,390 895,430 895,475 850,480 848,440 870,395;772,483 935,480;855,480 855,540 885,540 885,480;855,540 810,550 800,570;855,540 855,580;772,565 830,582 935,580;660,615 690,585 770,565;680,650 720,610 770,565;655,658 730,658 730,695 850,705 875,665;772,662 935,660 980,620 985,585 1020,600;795,580 830,625 890,640 870,665;795,580 775,620;690,490 690,540 650,545 655,620;730,490 725,520 740,545 690,550;612,560 660,520 690,515;655,745 772,745;735,745 720,790 655,800;655,770 690,765;680,820 745,822;740,838 690,860 668,905;945,530 975,530 975,585 945,580;945,530 945,550 965,555 965,580;730,705 850,705;710,555 740,565") +
      lines("ne", "283,322 283,378 216,378 216,406 236,406 236,432 208,432 205,594 244,594 240,648 0,640;242,648 247,700 466,700 466,664 505,645 525,600 545,570 600,500 664,430 763,430 761,856;468,662 500,650 507,642;653,325 653,378 615,381 615,433 664,431;280,702 280,809 318,809 318,965 390,965 390,1018;95,1018 95,966 57,966 57,990 0,992;280,704 466,701"),
  },
  {
    stroke: "#7f5a0a",
    d: lines("city", "445,260 450,300 480,310 480,340 530,375 620,430;530,260 530,375;370,300 440,305;390,265 410,280 440,300;480,310 530,290;540,300 590,320 595,340 570,380;660,280 665,330 620,345 625,380 600,400;665,330 730,290;480,370 420,415 350,415;490,370 480,340;430,450 500,450 525,375;395,415 400,440 430,455;340,462 610,455 765,450;720,310 690,360 700,390 650,400;590,390 550,410 560,425 600,430;700,370 750,385 765,410;690,430 690,480;690,430 765,430;720,430 740,480;540,460 560,510 610,530;600,430 610,500;490,460 445,520 450,610;450,545 400,548;410,580 458,580 458,548;490,580 520,560 560,580 600,590;490,580 495,625;465,610 490,580;540,620 545,600 600,590;445,632 650,632;450,655 530,652;530,632 530,830;575,632 575,690;612,625 612,940;450,715 530,720;450,690 655,690;450,690 450,830;378,740 450,750 655,745;378,780 655,780;380,705 400,735;450,820 510,820 530,800;450,830 465,865 510,865 575,860 570,800;510,830 510,970;465,865 490,890;400,925 490,895 510,950;410,935 440,950;575,860 655,850;570,870 580,895 540,910;510,905 560,920 600,910;530,940 600,995;560,920 540,950;612,900 655,860;540,795 545,820 570,820;480,820 480,780;612,840 640,870 650,895"),
  },
  {
    stroke: "#0f6080",
    d:
      lines("city", "608,1020 608,1060 545,1065 550,1145 500,1140 485,1140 485,1072;545,1145 560,1145;608,1070 770,1070 770,1130 795,1152 920,1155 935,1175 935,1315;728,875 728,1030 770,1060;732,1030 732,875;612,960 620,940 660,935 672,960 665,995 620,995;672,970 728,965;672,975 690,1005 690,1040 655,1030 655,1060;690,1040 728,1030;608,1075 608,1130 690,1132;620,1075 690,1075 730,1075 735,1105 752,1115 740,1140 700,1132 720,1165 770,1190;690,1132 690,1190 710,1225 775,1190;625,1190 650,1175 690,1175;570,1160 605,1130;595,1145 780,1390 850,1400;570,1165 600,1195 600,1225 650,1270 655,1300 720,1385;485,1072 530,1160 600,1225;720,1385 735,1410 750,1470 765,1500;778,1155 778,1270 695,1265 720,1230;720,1315 1050,1315 1180,1280;720,1300 730,1285 765,1270;780,1190 812,1190 812,1230 870,1260 900,1310;800,1350 820,1320 850,1325 830,1360 850,1385 830,1400 800,1380 800,1350;850,1390 885,1320 910,1330 890,1370 905,1420 880,1415 860,1400;905,1375 940,1360 990,1365 1000,1390 990,1415 960,1420 930,1400 905,1400;855,1405 855,1435 905,1450 905,1465 760,1475;1035,1420 1030,1445 1000,1475 900,1475;930,1410 1035,1420 1040,1450 1185,1455;345,1410 390,1430 455,1395 530,1380 540,1360 590,1382 720,1385;405,1150 405,1200 435,1280 420,1305 450,1325 480,1320 515,1355 535,1370;370,1145 530,1160;430,1050 430,1145 400,1135 385,1100;360,1105 385,1100 430,1050;935,747 935,825 1000,930 1030,955 1065,1020 1035,1070 1033,1168 935,1183;780,760 815,760 815,780 832,780 835,755 895,755;430,985 485,1072") +
      lines("plain", "140,175 140,190 160,190 160,204 182,204 182,190 202,190 204,297 243,297 238,478 118,494 118,508 178,508 178,538 195,540 195,570 33,571 33,598;238,478 475,481 485,445 510,410 525,418 640,418 645,387 765,387 765,268 560,263 557,175;238,478 243,550 138,640 105,630 60,628 47,640 55,600 80,602 155,585 160,573;238,550 238,703;80,602 80,628;92,655 153,660 160,710 170,712 155,740 155,780;92,655 105,638;40,705 488,705 488,722 1240,722 1500,720;25,778 280,782 280,800 255,800 255,812 238,814 238,845 178,845 160,832 130,832 128,845 118,845 118,903 0,906;-30,813 33,813 42,903;477,115 480,177 1500,177;560,263 765,268") +
      lines("s", "815,515 818,575 865,573 877,550 877,515;820,540 865,545;907,515 907,570 1055,573;835,575 845,600;775,610 862,607 862,670 875,685 865,700 835,700;907,607 907,680 865,700;865,607 967,605;780,610 785,630 800,628 825,670 835,700 870,708 880,770 910,900 925,1035 990,1130 980,1140 1047,1318;770,610 755,580 740,510 720,450;770,610 780,630;815,690 840,800 862,910 920,1035;880,705 880,730 940,730 942,705 970,697;745,510 860,515 930,512 950,480;820,700 830,730 835,712 872,712") +
      lines("ne", "353,1020 355,1072 388,1072;390,1123 387,1228 351,1228 352,1284 412,1284 416,1292 428,1276 445,1292 472,1298 482,1290 487,1258 496,1256 496,1333 426,1333 425,1390") +
      lines("se", "362,62 362,293 440,290 445,580 912,582;445,565 406,568 405,582 230,586;445,585 437,603 446,635 444,1333;445,590 480,583"),
  },
];

/* ---------- map view ---------- */

const MapFrame = styled.section`
  position: relative;
  width: 2340px;
  height: 1399px;
  overflow: hidden;
  background: #f1efe9;
`;

const MapCanvas = styled.svg`
  display: block;
  width: 2340px;
  height: 1399px;
  fill: none;
  stroke-linejoin: round;
  stroke-linecap: round;
`;

const Place = styled.text`
  font-family: "Noto Sans", "Open Sans", sans-serif;
  font-size: ${(p) => p.$size || 21}px;
  font-style: ${(p) => (p.$italic ? "italic" : "normal")};
  fill: ${(p) => p.$color || "#4d4d4d"};
  stroke: rgba(255, 255, 255, 0.65);
  stroke-width: ${(p) => (p.$bare ? 0 : 3)}px;
  paint-order: stroke;
`;

const ZoomControl = styled.div`
  position: absolute;
  top: 20px;
  left: 20px;
  width: 68px;
  border: 4px solid rgba(0, 0, 0, 0.2);
  border-radius: 8px;
  background-clip: padding-box;
  overflow: hidden;
`;

const ZoomButton = styled.button`
  display: flex;
  align-items: center;
  justify-content: center;
  width: 60px;
  height: 60px;
  padding: 0;
  border: 0;
  background: #fff;

  & + & {
    border-top: 2px solid #ccc;
  }
`;

const LayersControl = styled.button`
  position: absolute;
  top: 20px;
  right: 20px;
  display: flex;
  align-items: center;
  justify-content: center;
  width: 96px;
  height: 96px;
  padding: 0;
  border: 4px solid rgba(0, 0, 0, 0.2);
  border-radius: 10px;
  background: #fff;
  background-clip: padding-box;
`;

const Attribution = styled.div`
  position: absolute;
  right: 0;
  bottom: 0;
  height: 33px;
  padding: 0 10px;
  background: rgba(255, 255, 255, 0.7);
  font-size: 22px;
  line-height: 34px;
  letter-spacing: 0.1px;
  white-space: nowrap;
`;

const MapLink = styled.a`
  color: #0078a8;
`;

const Plane = ({ x, y }) => (
  <path
    transform={`translate(${x} ${y})`}
    fill="#8461c4"
    d="M0,-12 C2,-12 2,-9 2,-4 L12,3 L12,5 L2,2 L1.5,8 L5,11 L5,12 L0,11 L-5,12 L-5,11 L-1.5,8 L-2,2 L-12,5 L-12,3 L-2,-4 C-2,-9 -2,-12 0,-12 Z"
  />
);

const Shield = ({ x, y, w, h, label, tx, ty }) => (
  <g>
    <rect x={x} y={y} width={w} height={h} rx="5" fill="#f3b9b0" fillOpacity="0.5" stroke="#dc9a94" strokeWidth="2" strokeOpacity="0.6" />
    <Place x={tx} y={ty} $size={21} $color="#7b4a48" $bare>
      {label}
    </Place>
  </g>
);

function BaseMap() {
  return (
    <g>
      <path d={PINK} fill="#f2e8e3" />
      <path d={FOREST} fill="#bbdab1" />
      <path d={GRASS} fill="#d7f0c0" />
      <path d={WOODS} fill="#bbdab1" />
      <path d={OPEN_LAND} fill="#f1efe9" />
      <path d={PALE} fill="#eff2dc" />
      <path d={MINT} fill="#e0fce6" />
      <path d={TOWN} fill="#d9d9d9" />
      <path d={MILITARY} fill="#f4e1db" />
      <path d={MILITARY} fill="url(#hatch)" stroke="#f3cfca" strokeWidth="2" />
      <path d={WATER} fill="#aad3df" />
      <path d={FOREST_EDGE} stroke="#7fbf7b" strokeOpacity="0.6" strokeWidth="5" strokeLinejoin="miter" />
      <path d={BEAVER_CREEK} fill="#bbdab1" stroke="#8fc788" strokeWidth="4" strokeLinejoin="miter" />
      <path d={MINOR_ROADS} stroke="#c4c1c3" strokeWidth="2" />
      <path d={lines("ne", "215,25 190,50 185,80 150,115 155,150 148,190 160,215 158,250 140,265 125,245 80,240 60,280 20,290")} stroke="#bbdab1" strokeWidth="9" strokeDasharray="14 3" />
      <path d={RIVERS} stroke="#aad3df" strokeWidth="4" />
      <path d={RIVERS_DASHED} stroke="#aad3df" strokeWidth="4" strokeDasharray="12 10" />
      <path d={COUNTY_LINES} stroke="#c9b3c6" strokeWidth="3" strokeDasharray="14 4 3 4" strokeLinecap="butt" />
      <path d={RAIL} stroke="#999" strokeWidth="2" />
      <path d={ORANGE_ROADS} stroke="#f8c67e" strokeWidth="4" />
      <path d={TRUNK} stroke="#fa9e86" strokeWidth="4.5" />
      <path d={MOTORWAY} stroke="#e86a85" strokeWidth="5.5" />
      <path d={MOTORWAY_MINOR} stroke="#e58a9c" strokeWidth="4" />
      <Shield x={823.5} y={3054} w={66} h={34} label="I 25" tx={839} ty={3078} />
      <Shield x={990} y={2969.5} w={67} h={30} label="CO 21" tx={992} ty={2988.5} />
      <Shield x={840} y={3332} w={92} h={34} label="CO 115" tx={851} ty={3357} />
      <Plane x={872.5} y={2932} />
      <Plane x={1041} y={3252} />
      <Plane x={965} y={3490} />
      <Place x="97" y="2567" $size={28} $italic $color="#33963a" textLength="176">Pike National</Place>
      <Place x="184" y="2603" textAnchor="middle" $size={28} $italic $color="#33963a">Forest</Place>
      <Place x="479" y="2884" textLength="95">Woodland</Place>
      <Place x="506" y="2909" textLength="42">Park</Place>
      <Place x="146" y="2921" textAnchor="end">George</Place>
      <Place x="294" y="3090" $italic $color="#a27ea8" textLength="113">Teller County</Place>
      <Place x="287.6" y="3358" textLength="125">Cripple Creek</Place>
      <Place x="595" y="3592" textAnchor="middle" $size={20} $italic $color="#6a906a">Beaver</Place>
      <Place x="520" y="3617" $size={20} $italic $color="#6a906a" textLength="149">Creek Wilderness</Place>
      <Place x="595" y="3641" textAnchor="middle" $size={20} $italic $color="#6a906a">Study Area</Place>
      <Place x="818" y="3645" $size={24} $italic $bare $color="#8e4862" textLength="122">Fort Carson</Place>
      <Place x="752" y="3198" $size={29} $color="#444" textLength="225">Colorado Springs</Place>
      <Place x="1005" y="3478" $color="#555" textLength="80">Fountain</Place>
      <path d="M1576,3880 A27,27 0 0 1 1628,3880 M1656,3865 V3880" stroke="#aaa" strokeWidth="2.5" />
    </g>
  );
}

function DistrictMap() {
  return (
    <MapFrame>
      <MapCanvas viewBox="89 2481 2340 1399">
        <defs>
          <pattern id="hatch" width="9" height="9" patternUnits="userSpaceOnUse" patternTransform="rotate(45)">
            <path d="M0,0 V9" stroke="#efc8c2" strokeWidth="1.6" />
          </pattern>
        </defs>
        <BaseMap />
        {OVERLAY.map((o) => (
          <path key={o.fill} d={o.d} fill={o.fill} fillOpacity="0.5" />
        ))}
        {PRECINCTS.map((p) => (
          <path key={p.stroke} d={p.d} stroke={p.stroke} strokeWidth="2" />
        ))}
        {OVERLAY.map((o) => (
          <path key={o.fill} d={o.d} stroke="#000" strokeWidth="3" />
        ))}
      </MapCanvas>
      <ZoomControl>
        <ZoomButton aria-label="Zoom in">
          <svg width="24" height="24"><path d="M0,12 H24 M12,0 V24" stroke="#000" strokeWidth="4.5" /></svg>
        </ZoomButton>
        <ZoomButton aria-label="Zoom out">
          <svg width="24" height="24"><path d="M0,12 H24" stroke="#000" strokeWidth="4.5" /></svg>
        </ZoomButton>
      </ZoomControl>
      <LayersControl aria-label="Layers">
        <svg width="52" height="52" viewBox="0 0 52 52">
          <path d="M0,34 L26,17 L52,34 L26,51 Z" fill="#b2b2b2" stroke="#8a8a8a" />
          <path d="M0,26 L26,9 L52,26 L26,43 Z" fill="#c6c6c6" stroke="#8a8a8a" />
          <path d="M0,17.5 L26,1 L52,17.5 L26,34.5 Z" fill="#efefef" />
          <path d="M8,23 L26,9 L44,23 L26,34.5 Z" fill="#dcdcdc" />
          <path d="M0,17.5 L26,34.5 L52,17.5" fill="none" stroke="#7c7c7c" strokeWidth="1.6" />
        </svg>
      </LayersControl>
      <Attribution>
        <MapLink>Leaflet</MapLink> | © <MapLink>OpenStreetMap</MapLink> contributors
      </Attribution>
    </MapFrame>
  );
}

export default function App() {
  return (
    <Container>
      <GlobalStyle />
      <Jumbotron>
        <Title>County Commissioner Redistricting</Title>
        <Subtitle>El Paso County, Colorado</Subtitle>
        <Lead>Choose a district map to explore by using the map layer control.</Lead>
      </Jumbotron>
      <Grid>
        <Stack>
          <Well>
            <Label>What type of data would you like to see?</Label>
            <Select>
              Demographics
              <svg width="18" height="10" viewBox="0 0 18 10">
                <path d="M1,1 L9,9 L17,1" fill="none" stroke="#333" strokeWidth="2" />
              </svg>
            </Select>
          </Well>
          <Panel $height={262}>
            <PanelHeading>Current View</PanelHeading>
            <PanelBody>
              <Line>Viewing map: Current</Line>
              <Line>Viewing data: Demographics</Line>
            </PanelBody>
          </Panel>
        </Stack>
        {DISTRICTS.map((d) => (
          <DistrictPanel key={d.id} district={d} />
        ))}
      </Grid>
      <DistrictMap />
    </Container>
  );
}
